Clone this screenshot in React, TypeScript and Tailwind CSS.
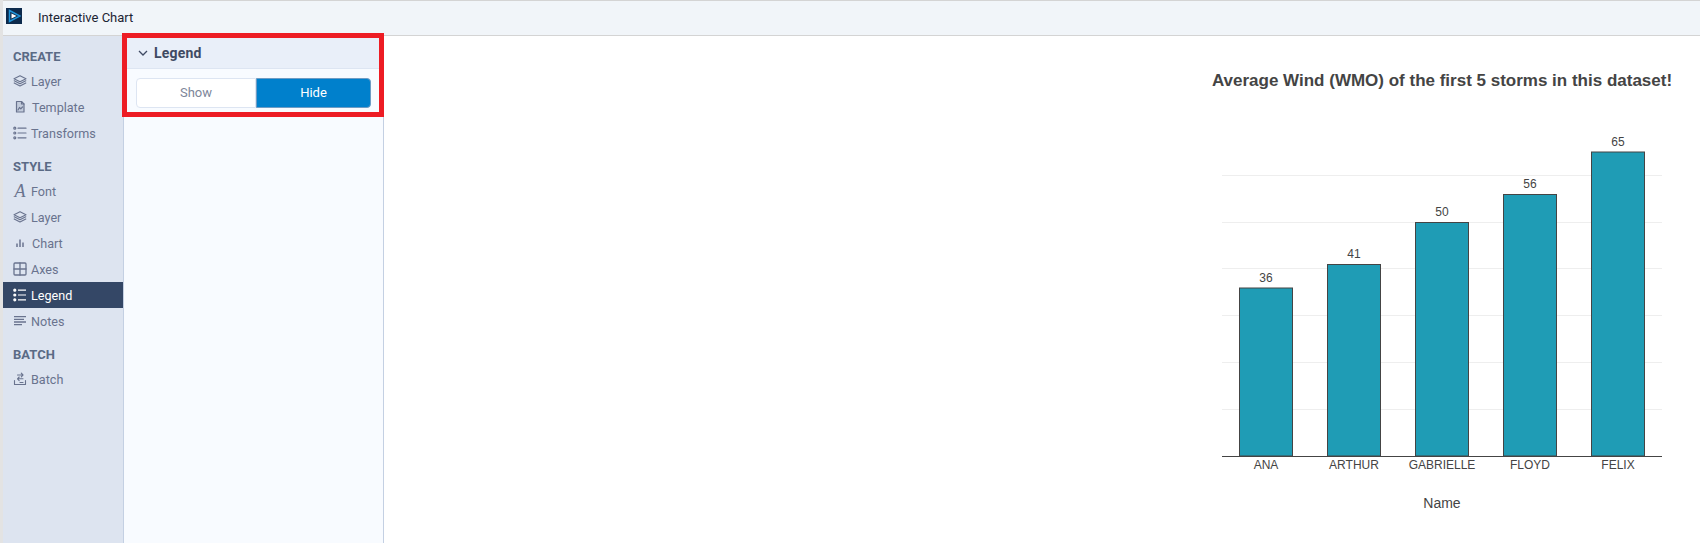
import React from "react";

const S = { fill: "none", stroke: "currentColor", strokeWidth: 1.2, strokeLinecap: "round" as const, strokeLinejoin: "round" as const };

const LayerIcon = () => (
  <svg width="14" height="14" viewBox="0 0 14 14" {...S} strokeWidth={1.1}>
    <path d="M7 1.8 L13 4.8 L7 7.8 L1 4.8 Z" />
    <path d="M1.2 6.8 L7 9.8 L12.8 6.8" />
    <path d="M1.2 8.9 L7 11.9 L12.8 8.9" />
  </svg>
);
const TemplateIcon = () => (
  <svg width="14" height="14" viewBox="0 0 14 14" {...S}>
    <path d="M3.5 1.5 H8.5 L11 4 V12 H3.5 Z" fill="#c3ccdc" />
    <path d="M8.5 1.5 V4 H11" />
    <path d="M5 10 L6.5 7.5 L7.8 8.8 L9.5 7" />
  </svg>
);
const ListIcon = () => (
  <svg width="14" height="14" viewBox="0 0 14 14" {...S}>
    <rect x="0.8" y="1.2" width="2" height="2" rx="1" />
    <rect x="0.8" y="6" width="2" height="2" rx="1" />
    <rect x="0.8" y="10.8" width="2" height="2" rx="1" />
    <path d="M5 2.2 H13 M5 7 H13 M5 11.8 H13" />
  </svg>
);
const ListActiveIcon = () => (
  <svg width="14" height="14" viewBox="0 0 14 14" fill="currentColor" stroke="currentColor" strokeWidth="1.2">
    <rect x="0.8" y="1.2" width="2" height="2" rx="1" />
    <rect x="0.8" y="6" width="2" height="2" rx="1" />
    <rect x="0.8" y="10.8" width="2" height="2" rx="1" />
    <path d="M5 2.2 H13 M5 7 H13 M5 11.8 H13" />
  </svg>
);
const FontIcon = () => (
  <span className="w-[14px] text-center text-[18px] leading-none italic" style={{ fontFamily: '"Liberation Serif", serif' }}>A</span>
);
const ChartIcon = () => (
  <svg width="14" height="14" viewBox="0 0 14 14" {...S} strokeWidth={1.5} strokeLinecap="butt">
    <path d="M4 11 V7.5 M7 11 V3.5 M10 11 V6.5" />
  </svg>
);
const AxesIcon = () => (
  <svg width="14" height="14" viewBox="0 0 14 14" {...S} strokeWidth={1.3}>
    <rect x="1" y="1" width="12" height="12" rx="1" />
    <path d="M7 1 V13 M1 7 H13" />
  </svg>
);
const NotesIcon = () => (
  <svg width="14" height="14" viewBox="0 0 14 14" {...S} strokeLinecap="butt" strokeWidth={1.3}>
    <path d="M1 2.6 H13 M1 5.3 H11 M1 8 H13 M1 10.7 H9" />
  </svg>
);
const BatchIcon = () => (
  <svg width="14" height="14" viewBox="0 0 14 14" {...S} strokeWidth={1.1}>
    <path d="M1.5 8.5 V12.5 H12.5 V8.5" />
    <path d="M4.5 3 H10 M8.3 1.2 L10 3 L8.3 4.8" />
    <path d="M10 6.8 H4.5 M6.2 5 L4.5 6.8 L6.2 8.6" />
    <path d="M7 10.5 H10" />
  </svg>
);

function Row({ icon, label, active, gap = "gap-[4px]" }: { icon: React.ReactNode; label: string; active?: boolean; gap?: string }) {
  return (
    <div className={`flex h-[26px] items-center pl-[10px] text-[12.6px] ${gap} ${active ? "bg-[#344766] text-white" : "text-[#69738e]"}`}>
      {icon}
      <span className="pt-[2px]">{label}</span>
    </div>
  );
}

function Head({ children }: { children: React.ReactNode }) {
  return <div className="h-[32px] pt-[14px] pl-[10px] text-[13px] leading-[14px] font-bold text-[#5a6a85]">{children}</div>;
}

const bars = [
  { x: 1239.5, y: 288, v: 36, n: "ANA" },
  { x: 1327.5, y: 264.5, v: 41, n: "ARTHUR" },
  { x: 1415.5, y: 222.5, v: 50, n: "GABRIELLE" },
  { x: 1503.5, y: 194.5, v: 56, n: "FLOYD" },
  { x: 1591.5, y: 152, v: 65, n: "FELIX" },
];
const grid = [175.5, 222.5, 268.5, 315.5, 362.5, 409.5];

function Chart() {
  return (
    <svg width="510" height="507" viewBox="1190 36 510 507" style={{ fontFamily: '"Liberation Sans", Arial, sans-serif' }}>
      <text x="1442" y="86" textAnchor="middle" fontSize="17" fontWeight="700" fill="#444444">
        Average Wind (WMO) of the first 5 storms in this dataset!
      </text>
      {grid.map((y) => (
        <line key={y} x1="1222" x2="1662" y1={y} y2={y} stroke="#eeeeee" />
      ))}
      {bars.map((b) => (
        <g key={b.n}>
          <rect x={b.x} y={b.y} width="53" height={456 - b.y} fill="#1f9cb5" stroke="#444444" />
          <text x={b.x + 26.5} y={b.y - 6.5} textAnchor="middle" fontSize="12" fill="#444444">{b.v}</text>
          <text x={b.x + 26.5} y="469" textAnchor="middle" fontSize="12" fill="#444444">{b.n}</text>
        </g>
      ))}
      <line x1={1222} x2="1662" y1="456.5" y2="456.5" stroke="#444444" />
      <text x="1442" y="508" textAnchor="middle" fontSize="14" fill="#444444">Name</text>
    </svg>
  );
}

export default function App() {
  return (
    <div className="relative flex h-[543px] w-[1700px] flex-col overflow-hidden bg-white pl-[3px]" style={{ fontFamily: 'Roboto, "Liberation Sans", sans-serif' }}>
      <div className="absolute inset-y-0 left-0 w-[3px] bg-[#e3e3e3]" />
      <header className="flex h-[36px] flex-none items-center border-t border-b border-[#d4d4d4] bg-[#f1f5f9]">
        <div className="mb-[4px] ml-[3px] flex h-[16px] w-[16px] items-center justify-center bg-[#0d2a4c]">
          <svg width="14" height="14" viewBox="0 0 14 14">
            <path d="M2.5 1.5 L13 7 L2.5 12.5 Z" fill="none" stroke="#1f93d8" strokeWidth="1.5" />
            <path d="M4.5 4.5 L9.5 7 L4.5 9.5 Z" fill="#ffffff" />
          </svg>
        </div>
        <span className="ml-[16px] text-[13px] text-[#1c2433]">Interactive Chart</span>
      </header>
      <div className="flex min-h-0 flex-1">
        <nav className="w-[121px] flex-none border-r border-[#c4d0e3] bg-[#dde4f0]">
          <Head>CREATE</Head>
          <Row icon={<LayerIcon />} label="Layer" />
          <Row icon={<TemplateIcon />} label="Template" gap="gap-[5px]" />
          <Row icon={<ListIcon />} label="Transforms" />
          <Head>STYLE</Head>
          <Row icon={<FontIcon />} label="Font" gap="gap-[4px]" />
          <Row icon={<LayerIcon />} label="Layer" />
          <Row icon={<ChartIcon />} label="Chart" gap="gap-[5px]" />
          <Row icon={<AxesIcon />} label="Axes" />
          <Row icon={<ListActiveIcon />} label="Legend" active />
          <Row icon={<NotesIcon />} label="Notes" />
          <Head>BATCH</Head>
          <Row icon={<BatchIcon />} label="Batch" />
        </nav>
        <aside className="w-[260px] flex-none border-r border-[#c4d0e3] bg-[#f8fbff]">
          <div className="flex h-[33px] items-center gap-[6px] border-b border-[#dde5f2] bg-[#e9eff9] pl-[14px] pt-[2px] text-[14px] font-bold tracking-[0.2px] text-[#3f4a63]">
            <svg width="10" height="10" viewBox="0 0 10 10" fill="none" stroke="#3f4a63" strokeWidth="1.3"><path d="M1 3 L5 7 L9 3" /></svg>
            <span>Legend</span>
          </div>
          <div className="flex px-[12px] pt-[9px]">
            <div className="flex h-[30px] w-[120px] items-center justify-center rounded-l-[4px] border border-[#dde5f2] bg-white text-[13px] text-[#7d8699]">Show</div>
            <div className="flex h-[30px] w-[115px] items-center justify-center rounded-r-[4px] border border-[#6e9cc4] bg-[#0080cc] text-[13px] text-white">Hide</div>
          </div>
        </aside>
        <main className="flex min-w-0 flex-1 justify-end bg-white">
          <Chart />
        </main>
      </div>
      <div className="pointer-events-none absolute left-[122px] top-[33px] h-[84px] w-[262px] border-[5px] border-[#ed1c24]" />
    </div>
  );
}
